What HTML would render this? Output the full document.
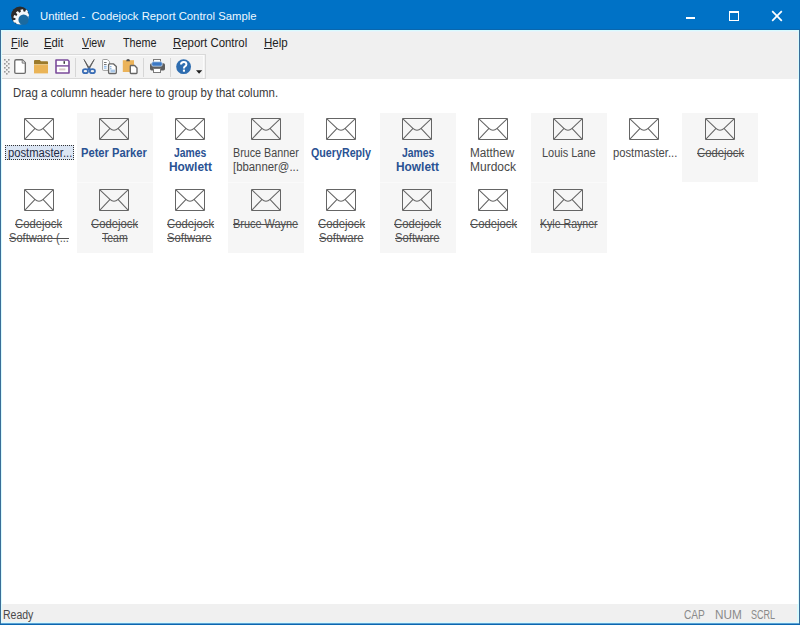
<!DOCTYPE html>
<html><head><meta charset="utf-8">
<style>
*{margin:0;padding:0;box-sizing:border-box}
html,body{width:800px;height:625px;overflow:hidden;background:#0072c6;font-family:"Liberation Sans",sans-serif}
.t{position:absolute;white-space:pre}
.a{position:absolute}
</style></head>
<body>

<div class="a" style="left:0;top:0;width:800px;height:30px;background:#0072c6"></div>
<svg class="a" style="left:10px;top:6px" width="20" height="20" viewBox="0 0 20 20">
<defs><clipPath id="cc"><circle cx="10" cy="9.6" r="9"/></clipPath></defs>
<circle cx="10" cy="9.6" r="9" fill="#2b2b2b"/>
<g clip-path="url(#cc)">
<g fill="#f4f8fb" transform="translate(13.6,13.8)">
<circle r="8.2"/>
<rect x="-1.3" y="-10.5" width="2.6" height="3" transform="rotate(-100)"/>
<rect x="-1.3" y="-10.5" width="2.6" height="3" transform="rotate(-70)"/>
<rect x="-1.3" y="-10.5" width="2.6" height="3" transform="rotate(-40)"/>
<rect x="-1.3" y="-10.5" width="2.6" height="3" transform="rotate(-10)"/>
<rect x="-1.3" y="-10.5" width="2.6" height="3" transform="rotate(20)"/>
</g>
</g>
<path d="M13.6 13.8 m-5.2 0 a5.2 5.2 0 1 0 10.4 0 a5.2 5.2 0 1 0 -10.4 0" fill="#1b6aa0"/>
<rect x="18.6" y="10" width="3" height="12" fill="#0072c6"/>
<rect x="10" y="18.8" width="12" height="3" fill="#0072c6"/>
</svg>
<div class="t" style="left:39.52px;top:11px;font-size:11.5px;font-weight:400;color:#eef8ff;line-height:11.5px;transform:scaleX(0.9817);transform-origin:0 0;">Untitled -  Codejock Report Control Sample</div>
<div class="a" style="left:685.5px;top:17px;width:9px;height:2px;background:#fff"></div>
<div class="a" style="left:729px;top:11px;width:10px;height:10px;border:1.5px solid #fff;border-top-width:2.5px"></div>
<svg class="a" style="left:771px;top:10px" width="12" height="12" viewBox="0 0 12 12"><path d="M1.2 1.2L10.8 10.8M10.8 1.2L1.2 10.8" stroke="#fff" stroke-width="1.7"/></svg>
<div class="a" style="left:0;top:29px;width:800px;height:1px;background:#0a66ad"></div>
<div class="a" style="left:1px;top:30px;width:798px;height:593px;background:#d8fbff"></div>
<div class="a" style="left:2px;top:31px;width:796px;height:48px;background:#f0f0f0"></div>
<div class="a" style="left:2px;top:31px;width:796px;height:1px;background:#eaf3f9"></div>
<div class="t" style="left:10.68px;top:37px;font-size:12px;font-weight:400;color:#222;line-height:12px;transform:scaleX(0.9167);transform-origin:0 0;"><u>F</u>ile</div>
<div class="t" style="left:44.46px;top:37px;font-size:12px;font-weight:400;color:#222;line-height:12px;transform:scaleX(0.9400);transform-origin:0 0;"><u>E</u>dit</div>
<div class="t" style="left:81.60px;top:37px;font-size:12px;font-weight:400;color:#222;line-height:12px;transform:scaleX(0.8885);transform-origin:0 0;"><u>V</u>iew</div>
<div class="t" style="left:122.70px;top:37px;font-size:12px;font-weight:400;color:#222;line-height:12px;transform:scaleX(0.9000);transform-origin:0 0;">Theme</div>
<div class="t" style="left:172.65px;top:37px;font-size:12px;font-weight:400;color:#222;line-height:12px;transform:scaleX(0.9506);transform-origin:0 0;"><u>R</u>eport Control</div>
<div class="t" style="left:263.84px;top:37px;font-size:12px;font-weight:400;color:#222;line-height:12px;transform:scaleX(0.9583);transform-origin:0 0;"><u>H</u>elp</div>
<div class="a" style="left:2px;top:54px;width:204px;height:25px;background:#f2f2f2;border-top:1px solid #d9d9d9;border-right:1px solid #d9d9d9;border-bottom:1px solid #d9d9d9"></div>
<div class="a" style="left:2px;top:55px;width:202px;height:23px;border-top:1px solid #fbfbfb;border-right:1px solid #fbfbfb"></div>
<svg class="a" style="left:0;top:0" width="12" height="80"><rect x="4" y="59" width="1.6" height="1.6" fill="#9a9a9a"/><rect x="8" y="59" width="1.6" height="1.6" fill="#9a9a9a"/><rect x="6" y="61" width="1.6" height="1.6" fill="#9a9a9a"/><rect x="4" y="63" width="1.6" height="1.6" fill="#9a9a9a"/><rect x="8" y="63" width="1.6" height="1.6" fill="#9a9a9a"/><rect x="6" y="65" width="1.6" height="1.6" fill="#9a9a9a"/><rect x="4" y="67" width="1.6" height="1.6" fill="#9a9a9a"/><rect x="8" y="67" width="1.6" height="1.6" fill="#9a9a9a"/><rect x="6" y="69" width="1.6" height="1.6" fill="#9a9a9a"/><rect x="4" y="71" width="1.6" height="1.6" fill="#9a9a9a"/><rect x="8" y="71" width="1.6" height="1.6" fill="#9a9a9a"/><rect x="6" y="73" width="1.6" height="1.6" fill="#9a9a9a"/></svg>
<svg class="a" style="left:0;top:0" width="60" height="80">
<path d="M14.75 61.2Q14.75 59.75 16.2 59.75H22.3L25.35 62.8V72.3Q25.35 73.4 24.2 73.4H15.9Q14.75 73.4 14.75 72.3Z" fill="#fff" stroke="#6e6e6e" stroke-width="1.35" stroke-linejoin="round"/>
<path d="M22.2 60V63.1H25.2" fill="#e8e8e8" stroke="#7a7a7a" stroke-width="1"/>
<path d="M34 61Q34 60 35 60H39.8L41 61.3H47.2Q48 61.3 48 62.2V65H34Z" fill="#9b7a2b"/>
<path d="M34 64.6H48V73.4H34Z" fill="#eab457"/>
<path d="M34 64.6H48" stroke="#f6d9a3" stroke-width="0.8"/>
</svg>
<svg class="a" style="left:0;top:0" width="100" height="80">
<path d="M56 60H67.8L69 61.2V73H56Z" fill="#fff" stroke="#7b4b9b" stroke-width="1.6" stroke-linejoin="round"/>
<rect x="56" y="65.2" width="13" height="1.4" fill="#7b4b9b"/>
<rect x="63.5" y="61.2" width="1.5" height="2.6" fill="#3d3d3d"/>
<rect x="59.2" y="68.4" width="6.2" height="2" fill="#d9cbc6"/>
<rect x="75" y="58" width="1" height="19" fill="#d6d6d6"/>
<path d="M84 59.5L89 67.5L94.2 59.5L89.6 68.3H88.4Z" fill="#5f5f5f" stroke="#5f5f5f" stroke-width="0.9" stroke-linejoin="round"/>
<ellipse cx="85.4" cy="71.2" rx="2.6" ry="2" fill="none" stroke="#3a6db5" stroke-width="1.7"/>
<ellipse cx="92.4" cy="71.2" rx="2.6" ry="2" fill="none" stroke="#3a6db5" stroke-width="1.7"/>
<path d="M87.4 69.6L89 68.2L90.6 69.6" fill="none" stroke="#3a6db5" stroke-width="1.4"/>
</svg>
<svg class="a" style="left:0;top:0" width="210" height="80">
<path d="M102.6 60.2Q102.6 59.5 103.3 59.5H107.3L109.6 61.8V69.7Q109.6 70.4 108.9 70.4H103.3Q102.6 70.4 102.6 69.7Z" fill="#fff" stroke="#9d9d9d" stroke-width="1"/>
<path d="M104 62.5H106.6M104 64.5H106.6" stroke="#6a6a6a" stroke-width="0.9"/>
<path d="M104 66.3H106.6M104 68.1H106.6" stroke="#6aa0dc" stroke-width="0.9"/>
<path d="M108.6 64.8Q108.6 63.9 109.5 63.9H113.6L116.3 66.6V72.6Q116.3 73.5 115.4 73.5H109.5Q108.6 73.5 108.6 72.6Z" fill="#fff" stroke="#656565" stroke-width="1.35" stroke-linejoin="round"/>
<rect x="110.2" y="66.2" width="1.2" height="1" fill="#4a86c8"/>
<rect x="110.2" y="68.3" width="1.2" height="1" fill="#4a86c8"/>
<rect x="110.4" y="69.6" width="4.6" height="2.8" fill="#a9c7e8"/>
<rect x="122.8" y="60.2" width="11.2" height="11.8" fill="#ebb35a"/>
<path d="M126.2 61.2Q126.2 59 128.1 59Q130 59 130 61.2Z" fill="#4d4d4d"/>
<path d="M130.3 66.2Q130.3 65.5 131 65.5H134.6L137 67.9V72.8Q137 73.5 136.3 73.5H131Q130.3 73.5 130.3 72.8Z" fill="#fff" stroke="#656565" stroke-width="1.35" stroke-linejoin="round"/>
<rect x="143" y="58" width="1" height="19" fill="#d6d6d6"/>
<rect x="170" y="58" width="1" height="19" fill="#d6d6d6"/>
</svg>
<svg class="a" style="left:0;top:0" width="210" height="80">
<rect x="153.5" y="59.5" width="7" height="3.5" fill="#fff" stroke="#7a7a7a" stroke-width="1"/>
<rect x="150" y="63.2" width="15" height="7.2" rx="1.6" fill="#5e5e5e"/>
<rect x="151.8" y="61.8" width="10.4" height="4.4" rx="1.3" fill="#3b78c4" stroke="#d8e6f6" stroke-width="0.7"/>
<rect x="153.5" y="68.5" width="7" height="4" fill="#fff" stroke="#7a7a7a" stroke-width="1"/>
<circle cx="183.6" cy="66.7" r="7.4" fill="#2e6db0"/>
<path d="M181 64.6Q181 61.9 183.8 61.9Q186.4 61.9 186.4 64.3Q186.4 65.6 185 66.4Q183.9 67 183.9 68.4" fill="none" stroke="#fff" stroke-width="2"/>
<rect x="182.9" y="69.6" width="2.1" height="2.1" fill="#fff"/>
<path d="M196 70.3H202.2L199.1 73.7Z" fill="#1e1e1e"/>
</svg>
<div class="a" style="left:2px;top:79px;width:796px;height:525px;background:#fff"></div>
<div class="t" style="left:12.65px;top:87px;font-size:12px;font-weight:400;color:#3a3a3a;line-height:12px;transform:scaleX(0.9529);transform-origin:0 0;">Drag a column header here to group by that column.</div>
<svg class="a" style="left:24px;top:118px" width="30" height="22" viewBox="0 0 30 22"><path d="M0.5 0.5H29.5V21.5H0.5Z" fill="none" stroke="#656565" stroke-width="1"/>
<path d="M0.9 0.9L10.9 10.4Q15 14.2 19.1 10.4L29.1 0.9M0.9 21.1L10.8 10.6M29.1 21.1L19.2 10.6" fill="none" stroke="#656565" stroke-width="1.05"/></svg>
<div class="a" style="left:5px;top:145px;width:69px;height:15px;background:#dce6f4;border:1px dotted #333"></div>
<div class="t" style="left:7.70px;top:147px;font-size:12px;font-weight:400;color:#1e2a44;line-height:12px;transform:scaleX(0.9353);transform-origin:0 0;">postmaster...</div>
<div class="a" style="left:77px;top:113px;width:76px;height:69px;background:#f6f6f6"></div>
<div class="a" style="left:77px;top:182px;width:76px;height:1px;background:#fafafa"></div>
<svg class="a" style="left:99px;top:118px" width="30" height="22" viewBox="0 0 30 22"><path d="M0.5 0.5H29.5V21.5H0.5Z" fill="none" stroke="#656565" stroke-width="1"/>
<path d="M0.9 0.9L10.9 10.4Q15 14.2 19.1 10.4L29.1 0.9M0.9 21.1L10.8 10.6M29.1 21.1L19.2 10.6" fill="none" stroke="#656565" stroke-width="1.05"/></svg>
<div class="t" style="left:81.00px;top:147px;font-size:12px;font-weight:700;color:#2a5293;line-height:12px;transform:scaleX(0.9296);transform-origin:0 0;">Peter Parker</div>
<svg class="a" style="left:175px;top:118px" width="30" height="22" viewBox="0 0 30 22"><path d="M0.5 0.5H29.5V21.5H0.5Z" fill="none" stroke="#656565" stroke-width="1"/>
<path d="M0.9 0.9L10.9 10.4Q15 14.2 19.1 10.4L29.1 0.9M0.9 21.1L10.8 10.6M29.1 21.1L19.2 10.6" fill="none" stroke="#656565" stroke-width="1.05"/></svg>
<div class="t" style="left:174.40px;top:147px;font-size:12px;font-weight:700;color:#2a5293;line-height:12px;transform:scaleX(0.8649);transform-origin:0 0;">James</div>
<div class="t" style="left:169.00px;top:161px;font-size:12px;font-weight:700;color:#2a5293;line-height:12px;transform:scaleX(0.9907);transform-origin:0 0;">Howlett</div>
<div class="a" style="left:228px;top:113px;width:76px;height:69px;background:#f6f6f6"></div>
<div class="a" style="left:228px;top:182px;width:76px;height:1px;background:#fafafa"></div>
<svg class="a" style="left:251px;top:118px" width="30" height="22" viewBox="0 0 30 22"><path d="M0.5 0.5H29.5V21.5H0.5Z" fill="none" stroke="#656565" stroke-width="1"/>
<path d="M0.9 0.9L10.9 10.4Q15 14.2 19.1 10.4L29.1 0.9M0.9 21.1L10.8 10.6M29.1 21.1L19.2 10.6" fill="none" stroke="#656565" stroke-width="1.05"/></svg>
<div class="t" style="left:232.70px;top:147px;font-size:12px;font-weight:400;color:#484848;line-height:12px;transform:scaleX(0.8959);transform-origin:0 0;">Bruce Banner</div>
<div class="t" style="left:232.65px;top:161px;font-size:12px;font-weight:400;color:#484848;line-height:12px;transform:scaleX(0.9471);transform-origin:0 0;">[bbanner@...</div>
<svg class="a" style="left:326px;top:118px" width="30" height="22" viewBox="0 0 30 22"><path d="M0.5 0.5H29.5V21.5H0.5Z" fill="none" stroke="#656565" stroke-width="1"/>
<path d="M0.9 0.9L10.9 10.4Q15 14.2 19.1 10.4L29.1 0.9M0.9 21.1L10.8 10.6M29.1 21.1L19.2 10.6" fill="none" stroke="#656565" stroke-width="1.05"/></svg>
<div class="t" style="left:311.00px;top:147px;font-size:12px;font-weight:700;color:#2a5293;line-height:12px;transform:scaleX(0.8912);transform-origin:0 0;">QueryReply</div>
<div class="a" style="left:380px;top:113px;width:76px;height:69px;background:#f6f6f6"></div>
<div class="a" style="left:380px;top:182px;width:76px;height:1px;background:#fafafa"></div>
<svg class="a" style="left:402px;top:118px" width="30" height="22" viewBox="0 0 30 22"><path d="M0.5 0.5H29.5V21.5H0.5Z" fill="none" stroke="#656565" stroke-width="1"/>
<path d="M0.9 0.9L10.9 10.4Q15 14.2 19.1 10.4L29.1 0.9M0.9 21.1L10.8 10.6M29.1 21.1L19.2 10.6" fill="none" stroke="#656565" stroke-width="1.05"/></svg>
<div class="t" style="left:401.60px;top:147px;font-size:12px;font-weight:700;color:#2a5293;line-height:12px;transform:scaleX(0.8649);transform-origin:0 0;">James</div>
<div class="t" style="left:396.40px;top:161px;font-size:12px;font-weight:700;color:#2a5293;line-height:12px;transform:scaleX(0.9907);transform-origin:0 0;">Howlett</div>
<svg class="a" style="left:478px;top:118px" width="30" height="22" viewBox="0 0 30 22"><path d="M0.5 0.5H29.5V21.5H0.5Z" fill="none" stroke="#656565" stroke-width="1"/>
<path d="M0.9 0.9L10.9 10.4Q15 14.2 19.1 10.4L29.1 0.9M0.9 21.1L10.8 10.6M29.1 21.1L19.2 10.6" fill="none" stroke="#656565" stroke-width="1.05"/></svg>
<div class="t" style="left:470.02px;top:147px;font-size:12px;font-weight:400;color:#484848;line-height:12px;transform:scaleX(0.9778);transform-origin:0 0;">Matthew</div>
<div class="t" style="left:470.00px;top:161px;font-size:12px;font-weight:400;color:#484848;line-height:12px;">Murdock</div>
<div class="a" style="left:531px;top:113px;width:76px;height:69px;background:#f6f6f6"></div>
<div class="a" style="left:531px;top:182px;width:76px;height:1px;background:#fafafa"></div>
<svg class="a" style="left:553px;top:118px" width="30" height="22" viewBox="0 0 30 22"><path d="M0.5 0.5H29.5V21.5H0.5Z" fill="none" stroke="#656565" stroke-width="1"/>
<path d="M0.9 0.9L10.9 10.4Q15 14.2 19.1 10.4L29.1 0.9M0.9 21.1L10.8 10.6M29.1 21.1L19.2 10.6" fill="none" stroke="#656565" stroke-width="1.05"/></svg>
<div class="t" style="left:542.09px;top:147px;font-size:12px;font-weight:400;color:#484848;line-height:12px;transform:scaleX(0.9138);transform-origin:0 0;">Louis Lane</div>
<svg class="a" style="left:629px;top:118px" width="30" height="22" viewBox="0 0 30 22"><path d="M0.5 0.5H29.5V21.5H0.5Z" fill="none" stroke="#656565" stroke-width="1"/>
<path d="M0.9 0.9L10.9 10.4Q15 14.2 19.1 10.4L29.1 0.9M0.9 21.1L10.8 10.6M29.1 21.1L19.2 10.6" fill="none" stroke="#656565" stroke-width="1.05"/></svg>
<div class="t" style="left:613.00px;top:147px;font-size:12px;font-weight:400;color:#484848;line-height:12px;transform:scaleX(0.9353);transform-origin:0 0;">postmaster...</div>
<div class="a" style="left:682px;top:113px;width:76px;height:69px;background:#f6f6f6"></div>
<svg class="a" style="left:705px;top:118px" width="30" height="22" viewBox="0 0 30 22"><path d="M0.5 0.5H29.5V21.5H0.5Z" fill="none" stroke="#656565" stroke-width="1"/>
<path d="M0.9 0.9L10.9 10.4Q15 14.2 19.1 10.4L29.1 0.9M0.9 21.1L10.8 10.6M29.1 21.1L19.2 10.6" fill="none" stroke="#656565" stroke-width="1.05"/></svg>
<div class="t" style="left:697.00px;top:147px;font-size:12px;font-weight:400;color:#505050;line-height:12px;transform:scaleX(0.9400);transform-origin:0 0;text-decoration:line-through;">Codejock</div>
<svg class="a" style="left:24px;top:189px" width="30" height="22" viewBox="0 0 30 22"><path d="M0.5 0.5H29.5V21.5H0.5Z" fill="none" stroke="#656565" stroke-width="1"/>
<path d="M0.9 0.9L10.9 10.4Q15 14.2 19.1 10.4L29.1 0.9M0.9 21.1L10.8 10.6M29.1 21.1L19.2 10.6" fill="none" stroke="#656565" stroke-width="1.05"/></svg>
<div class="t" style="left:15.00px;top:218px;font-size:12px;font-weight:400;color:#505050;line-height:12px;transform:scaleX(0.9400);transform-origin:0 0;text-decoration:line-through;">Codejock</div>
<div class="t" style="left:8.67px;top:232px;font-size:12px;font-weight:400;color:#505050;line-height:12px;transform:scaleX(0.9270);transform-origin:0 0;text-decoration:line-through;">Software (...</div>
<div class="a" style="left:77px;top:183px;width:76px;height:70px;background:#f6f6f6"></div>
<svg class="a" style="left:99px;top:189px" width="30" height="22" viewBox="0 0 30 22"><path d="M0.5 0.5H29.5V21.5H0.5Z" fill="none" stroke="#656565" stroke-width="1"/>
<path d="M0.9 0.9L10.9 10.4Q15 14.2 19.1 10.4L29.1 0.9M0.9 21.1L10.8 10.6M29.1 21.1L19.2 10.6" fill="none" stroke="#656565" stroke-width="1.05"/></svg>
<div class="t" style="left:91.00px;top:218px;font-size:12px;font-weight:400;color:#505050;line-height:12px;transform:scaleX(0.9400);transform-origin:0 0;text-decoration:line-through;">Codejock</div>
<div class="t" style="left:101.60px;top:232px;font-size:12px;font-weight:400;color:#505050;line-height:12px;transform:scaleX(0.8759);transform-origin:0 0;text-decoration:line-through;">Team</div>
<svg class="a" style="left:175px;top:189px" width="30" height="22" viewBox="0 0 30 22"><path d="M0.5 0.5H29.5V21.5H0.5Z" fill="none" stroke="#656565" stroke-width="1"/>
<path d="M0.9 0.9L10.9 10.4Q15 14.2 19.1 10.4L29.1 0.9M0.9 21.1L10.8 10.6M29.1 21.1L19.2 10.6" fill="none" stroke="#656565" stroke-width="1.05"/></svg>
<div class="t" style="left:167.00px;top:218px;font-size:12px;font-weight:400;color:#505050;line-height:12px;transform:scaleX(0.9400);transform-origin:0 0;text-decoration:line-through;">Codejock</div>
<div class="t" style="left:167.46px;top:232px;font-size:12px;font-weight:400;color:#505050;line-height:12px;transform:scaleX(0.9391);transform-origin:0 0;text-decoration:line-through;">Software</div>
<div class="a" style="left:228px;top:183px;width:76px;height:70px;background:#f6f6f6"></div>
<svg class="a" style="left:251px;top:189px" width="30" height="22" viewBox="0 0 30 22"><path d="M0.5 0.5H29.5V21.5H0.5Z" fill="none" stroke="#656565" stroke-width="1"/>
<path d="M0.9 0.9L10.9 10.4Q15 14.2 19.1 10.4L29.1 0.9M0.9 21.1L10.8 10.6M29.1 21.1L19.2 10.6" fill="none" stroke="#656565" stroke-width="1.05"/></svg>
<div class="t" style="left:232.69px;top:218px;font-size:12px;font-weight:400;color:#505050;line-height:12px;transform:scaleX(0.9099);transform-origin:0 0;text-decoration:line-through;">Bruce Wayne</div>
<svg class="a" style="left:326px;top:189px" width="30" height="22" viewBox="0 0 30 22"><path d="M0.5 0.5H29.5V21.5H0.5Z" fill="none" stroke="#656565" stroke-width="1"/>
<path d="M0.9 0.9L10.9 10.4Q15 14.2 19.1 10.4L29.1 0.9M0.9 21.1L10.8 10.6M29.1 21.1L19.2 10.6" fill="none" stroke="#656565" stroke-width="1.05"/></svg>
<div class="t" style="left:318.15px;top:218px;font-size:12px;font-weight:400;color:#505050;line-height:12px;transform:scaleX(0.9400);transform-origin:0 0;text-decoration:line-through;">Codejock</div>
<div class="t" style="left:319.11px;top:232px;font-size:12px;font-weight:400;color:#505050;line-height:12px;transform:scaleX(0.9391);transform-origin:0 0;text-decoration:line-through;">Software</div>
<div class="a" style="left:380px;top:183px;width:76px;height:70px;background:#f6f6f6"></div>
<svg class="a" style="left:402px;top:189px" width="30" height="22" viewBox="0 0 30 22"><path d="M0.5 0.5H29.5V21.5H0.5Z" fill="none" stroke="#656565" stroke-width="1"/>
<path d="M0.9 0.9L10.9 10.4Q15 14.2 19.1 10.4L29.1 0.9M0.9 21.1L10.8 10.6M29.1 21.1L19.2 10.6" fill="none" stroke="#656565" stroke-width="1.05"/></svg>
<div class="t" style="left:393.85px;top:218px;font-size:12px;font-weight:400;color:#505050;line-height:12px;transform:scaleX(0.9400);transform-origin:0 0;text-decoration:line-through;">Codejock</div>
<div class="t" style="left:394.81px;top:232px;font-size:12px;font-weight:400;color:#505050;line-height:12px;transform:scaleX(0.9391);transform-origin:0 0;text-decoration:line-through;">Software</div>
<svg class="a" style="left:478px;top:189px" width="30" height="22" viewBox="0 0 30 22"><path d="M0.5 0.5H29.5V21.5H0.5Z" fill="none" stroke="#656565" stroke-width="1"/>
<path d="M0.9 0.9L10.9 10.4Q15 14.2 19.1 10.4L29.1 0.9M0.9 21.1L10.8 10.6M29.1 21.1L19.2 10.6" fill="none" stroke="#656565" stroke-width="1.05"/></svg>
<div class="t" style="left:470.00px;top:218px;font-size:12px;font-weight:400;color:#505050;line-height:12px;transform:scaleX(0.9400);transform-origin:0 0;text-decoration:line-through;">Codejock</div>
<div class="a" style="left:531px;top:183px;width:76px;height:70px;background:#f6f6f6"></div>
<svg class="a" style="left:553px;top:189px" width="30" height="22" viewBox="0 0 30 22"><path d="M0.5 0.5H29.5V21.5H0.5Z" fill="none" stroke="#656565" stroke-width="1"/>
<path d="M0.9 0.9L10.9 10.4Q15 14.2 19.1 10.4L29.1 0.9M0.9 21.1L10.8 10.6M29.1 21.1L19.2 10.6" fill="none" stroke="#656565" stroke-width="1.05"/></svg>
<div class="t" style="left:540.12px;top:218px;font-size:12px;font-weight:400;color:#505050;line-height:12px;transform:scaleX(0.8812);transform-origin:0 0;text-decoration:line-through;">Kyle Rayner</div>
<div class="a" style="left:2px;top:604px;width:795px;height:18px;background:#f0f0f0"></div>
<div class="a" style="left:1px;top:623px;width:798px;height:1px;background:#5d9fd3"></div>
<div class="a" style="left:0;top:624px;width:800px;height:1px;background:#0b68b0"></div>
<div class="a" style="left:0;top:30px;width:1px;height:594px;background:#3a6e98"></div>
<div class="a" style="left:799px;top:30px;width:1px;height:594px;background:#3a6e98"></div>
<div class="t" style="left:3.38px;top:609px;font-size:12px;font-weight:400;color:#4a4a4a;line-height:12px;transform:scaleX(0.8750);transform-origin:0 0;">Ready</div>
<div class="t" style="left:684.40px;top:609px;font-size:12px;font-weight:400;color:#8a8a8a;line-height:12px;transform:scaleX(0.8458);transform-origin:0 0;">CAP</div>
<div class="t" style="left:714.92px;top:609px;font-size:12px;font-weight:400;color:#8a8a8a;line-height:12px;transform:scaleX(0.9808);transform-origin:0 0;">NUM</div>
<div class="t" style="left:750.85px;top:609px;font-size:12px;font-weight:400;color:#8a8a8a;line-height:12px;transform:scaleX(0.7548);transform-origin:0 0;">SCRL</div>
</body></html>
